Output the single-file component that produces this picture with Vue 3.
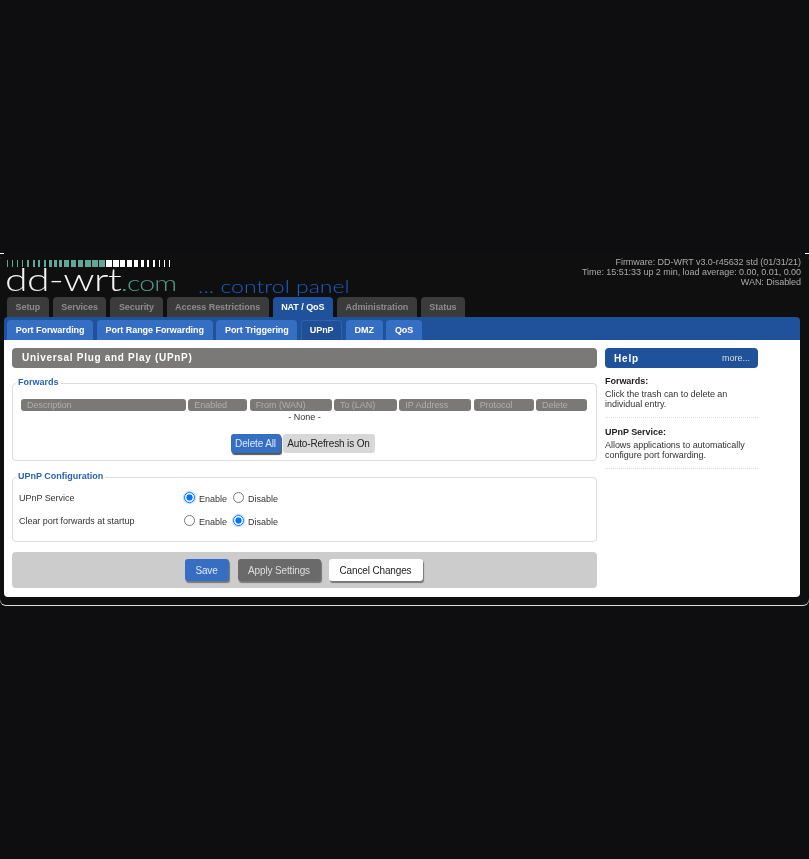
<script setup>
const mainTabs = ['Setup', 'Services', 'Security', 'Access Restrictions', 'NAT / QoS', 'Administration', 'Status']
const subTabs = ['Port Forwarding', 'Port Range Forwarding', 'Port Triggering', 'UPnP', 'DMZ', 'QoS']
const cols = [
  { label: 'Description', w: 165 },
  { label: 'Enabled', w: 59 },
  { label: 'From (WAN)', w: 82 },
  { label: 'To (LAN)', w: 63 },
  { label: 'IP Address', w: 72 },
  { label: 'Protocol', w: 60 },
  { label: 'Delete', w: 51 }
]
const teal = '#5fa897'
const white = '#fff'
const ticks = [
  [1, 4, teal], [1, 4, teal], [1, 4, teal], [1, 4, teal],
  [2, 3.5, teal], [2, 3.5, teal], [2, 3.5, teal], [2, 3.5, teal],
  [3, 2, teal], [3, 2, teal], [3, 2, teal],
  [5, 2, teal], [5, 2, teal], [5, 2, teal],
  [6, 1, teal], [6, 1, teal], [6, 1, teal],
  [6, 1, white], [6, 1, white], [5, 2, white], [5, 2, white], [4, 2.5, white],
  [3, 3, white], [2, 4, white], [2, 4, white], [1, 4.5, white], [1, 4, white], [1, 0, white]
]
</script>

<template>
  <div class="page">
    <div class="frame">
      <span class="nick left"></span>
      <span class="nick right"></span>
      <header class="head">
        <div class="logo">
          <div class="ticks">
            <i v-for="(t, n) in ticks" :key="n" :style="{ width: t[0] + 'px', marginRight: t[1] + 'px', background: t[2] }"></i>
          </div>
          <div class="wordmark"><span class="dd">dd-wrt</span><span class="com">.com</span></div>
          <div class="cp">... control panel</div>
        </div>
        <div class="info">
          <div>Firmware: <span class="fw">DD-WRT v3.0-r45632 std (01/31/21)</span></div>
          <div>Time: 15:51:33 up 2 min, load average: 0.00, 0.01, 0.00</div>
          <div>WAN: Disabled</div>
        </div>
      </header>
      <nav class="tabs">
        <a v-for="t in mainTabs" :key="t" class="tab" :class="{ on: t === 'NAT / QoS' }">{{ t }}</a>
      </nav>
      <nav class="subs">
        <a v-for="t in subTabs" :key="t" class="sub" :class="{ on: t === 'UPnP' }">{{ t }}</a>
      </nav>
      <div class="body">
        <main class="main">
          <h2 class="title">Universal Plug and Play (UPnP)</h2>
          <fieldset class="fs first">
            <legend>Forwards</legend>
            <div class="cols">
              <div v-for="c in cols" :key="c.label" class="col" :style="{ width: c.w + 'px' }">{{ c.label }}</div>
            </div>
            <div class="none">- None -</div>
            <div class="acts">
              <button class="btn del">Delete All</button>
              <button class="btn auto">Auto-Refresh is On</button>
            </div>
          </fieldset>
          <fieldset class="fs second">
            <legend>UPnP Configuration</legend>
            <div class="row">
              <span class="lbl">UPnP Service</span>
              <label class="opt"><input type="radio" name="a" checked>Enable</label>
              <label class="opt"><input type="radio" name="a">Disable</label>
            </div>
            <div class="row">
              <span class="lbl">Clear port forwards at startup</span>
              <label class="opt"><input type="radio" name="b">Enable</label>
              <label class="opt"><input type="radio" name="b" checked>Disable</label>
            </div>
          </fieldset>
          <div class="foot">
            <button class="fb save">Save</button>
            <button class="fb apply">Apply Settings</button>
            <button class="fb cancel">Cancel Changes</button>
          </div>
        </main>
        <aside class="help">
          <div class="hhead"><span class="ht">Help</span><span class="more">more...</span></div>
          <dl>
            <dt>Forwards:</dt>
            <dd>Click the trash can to delete an individual entry.</dd>
            <dt>UPnP Service:</dt>
            <dd>Allows applications to automatically configure port forwarding.</dd>
          </dl>
        </aside>
      </div>
    </div>
  </div>
</template>

<style>
html, body { margin: 0; background: #0e0e10; }
</style>

<style scoped>
.page {
  height: 859px;
  padding-top: 253px;
  box-sizing: border-box;
  font-family: "Liberation Sans", Arial, sans-serif;
  overflow: hidden;
}
.frame {
  position: relative;
  width: 809px;
  height: 352px;
  background: #0f0f0f;
  border-radius: 6px;
  box-sizing: border-box;
  padding: 0 9px 8px 4px;
  box-shadow: 0 1px 0 #ddd;
  filter: blur(.5px);
}
.nick {
  position: absolute;
  top: 0;
  width: 4px;
  height: 1px;
  background: #fff;
}
.nick.left { left: 0; }
.nick.right { right: 0; }
.head {
  height: 44px;
  display: flex;
  justify-content: space-between;
  position: relative;
}
.logo { position: relative; width: 400px; }
.ticks {
  position: absolute;
  left: 3px;
  top: 7px;
  display: flex;
  height: 7px;
}
.ticks i { display: block; height: 7px; flex: none; }
.wordmark {
  position: absolute;
  left: 1px;
  top: 6px;
  font-family: "Lato", sans-serif;
  font-weight: 300;
  font-size: 31px;
  line-height: 40px;
  letter-spacing: -.5px;
  transform: scaleX(1.32);
  transform-origin: left;
  white-space: nowrap;
}
.dd { color: #f4f4f4; }
.com { color: #4f9c8b; font-size: 21.5px; letter-spacing: -.6px; }
.cp {
  position: absolute;
  left: 194px;
  top: 22px;
  color: #1a5fc8;
  font-family: "Lato", sans-serif;
  font-weight: 300;
  font-size: 18px;
  line-height: 22px;
  transform: scaleX(1.28);
  transform-origin: left;
  white-space: nowrap;
}
.info {
  text-align: right;
  color: #aaa;
  font-size: 9px;
  letter-spacing: -.04px;
  line-height: 10px;
  padding-top: 4px;
  margin-right: -1px;
  position: absolute;
  right: 0;
  top: 0;
}
.fw { color: #aaa; }
.tabs {
  display: flex;
  gap: 4px;
  padding-left: 3px;
  height: 20px;
}
.tab {
  background: #3b3b3b;
  color: #8d8d8d;
  font-size: 9px;
  letter-spacing: -.05px;
  font-weight: 700;
  line-height: 20px;
  padding: 0 8.5px;
  border-radius: 4px 4px 0 0;
}
.tab.on { background: #20529c; color: #fff; }
.subs {
  display: flex;
  gap: 3.5px;
  background: #20529c;
  border-radius: 4px 4px 0 0;
  padding: 3px 0 0 3px;
  height: 23px;
  box-sizing: border-box;
}
.sub {
  background: #366ec4;
  color: #fff;
  font-size: 9px;
  letter-spacing: -.05px;
  font-weight: 700;
  line-height: 20px;
  padding: 0 8.75px;
  border-radius: 4px 4px 0 0;
}
.sub.on { background: #1f4f97; box-shadow: inset 0 1px 0 #2c62b0, inset 1px 0 0 #2c62b0, inset -1px 0 0 #2c62b0; }
.body {
  background: #fff;
  height: 257px;
  border-radius: 0 0 4px 4px;
  padding: 8px 0 0 8px;
  box-sizing: border-box;
  display: flex;
  gap: 8px;
}
.main { width: 585px; }
.title {
  margin: 0;
  height: 20px;
  background: #7a7977;
  color: #fff;
  border-radius: 4px;
  font-size: 10px;
  font-weight: 700;
  letter-spacing: .7px;
  line-height: 19px;
  padding-left: 10px;
}
.fs {
  margin: 0;
  padding: 0;
  border: 1px solid #ddd;
  border-radius: 4px;
  box-sizing: border-box;
  min-width: 0;
}
.fs legend {
  margin-left: 3px;
  padding: 0 2px 2px;
  color: #2a62b5;
  font-size: 9px;
  font-weight: 700;
  line-height: 10px;
}
.first { margin-top: 9px; height: 84px; padding-top: 10px; }
.second { margin-top: 10px; height: 71px; padding-top: 3px; }
.cols { display: flex; justify-content: space-between; margin: 0 9px 0 8px; }
.col {
  background: #7a7977;
  color: #b0afad;
  font-size: 9px;
  letter-spacing: -.04px;
  line-height: 12px;
  height: 12px;
  padding-left: 6px;
  box-sizing: border-box;
  border-radius: 3px;
  flex: none;
}
.none { text-align: center; font-size: 9px; line-height: 12px; color: #333; }
.acts { display: flex; justify-content: center; gap: 2px; margin-top: 11px; padding-right: 4px; }
.btn {
  border: 0;
  height: 19px;
  padding: 0;
  font-family: inherit;
  font-size: 10px;
  letter-spacing: -.14px;
  border-radius: 3px;
}
.del { width: 50px; background: #366ec4; color: #dfe8f6; box-shadow: 1px 2px 1px #555; }
.auto { width: 92px; background: #d8d8d8; color: #222; }
.row {
  display: flex;
  align-items: center;
  height: 23px;
  margin: 0 6px;
  font-size: 9px;
  letter-spacing: -.04px;
  color: #333;
}
.lbl { width: 165px; flex: none; }
.opt { display: flex; align-items: center; margin-right: 6px; padding-top: 2px; letter-spacing: 0; }
.opt input {
  appearance: none;
  width: 11px;
  height: 11px;
  margin: 0 4px 0 0;
  position: relative;
  top: -1px;
  box-sizing: border-box;
  border: 1px solid #777;
  border-radius: 50%;
  background: #fff;
}
.opt input:checked {
  border-color: #0075ff;
  background: radial-gradient(circle, #0075ff 0 2.8px, #fff 3.4px);
  box-shadow: 0 0 1px 1px rgba(0, 117, 255, .3);
}
.foot {
  margin-top: 10px;
  height: 36px;
  background: #ccc;
  border-radius: 4px;
  display: flex;
  justify-content: center;
  align-items: center;
  gap: 8px;
  padding-right: 2px;
}
.fb {
  border: 0;
  height: 22px;
  padding: 0;
  font-family: inherit;
  font-size: 10px;
  letter-spacing: -.14px;
  border-radius: 3px;
  box-shadow: 1px 2px 1px #777;
}
.save { width: 44px; background: #366ec4; color: #dfe8f6; margin-right: 1px; }
.apply { width: 83px; background: #6a6a6a; color: #ddd; }
.cancel { width: 94px; background: #fff; color: #222; }
.help { width: 153px; }
.hhead {
  height: 20px;
  background: #20529c;
  border-radius: 4px;
  display: flex;
  justify-content: space-between;
  align-items: center;
  padding: 0 8px 0 9px;
  color: #fff;
}
.ht { font-size: 10px; font-weight: 700; letter-spacing: .8px; }
.more { font-size: 9px; color: #ddd; }
dl { margin: 8px 0 0; font-size: 9px; letter-spacing: -.04px; line-height: 10px; color: #333; }
dt { font-weight: 700; color: #222; }
dd { margin: 3px 0 9px; padding-bottom: 8px; border-bottom: 1px dotted #ddd; margin-left: 0; }
</style>
